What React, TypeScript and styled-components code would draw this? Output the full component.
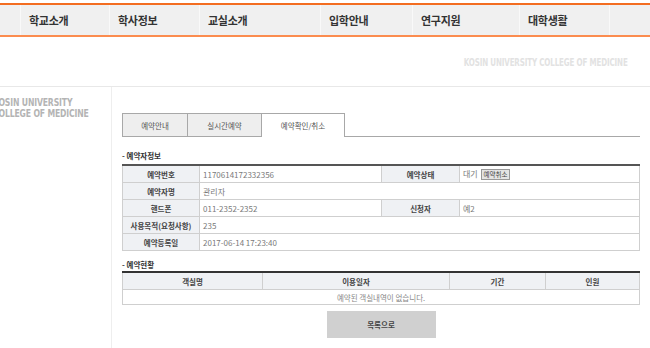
import React from 'react';
import styled, { createGlobalStyle } from 'styled-components';

const GlobalStyle = createGlobalStyle`
    html, body {
        margin: 0;
        padding: 0;
        background: #fff;
        overflow: hidden;
    }
    body {
        font-family: 'Noto Sans CJK KR', 'Noto Sans', sans-serif;
    }
`;

const menu = [
    { label: '', width: 20 },
    { label: '학교소개', width: 89 },
    { label: '학사정보', width: 90 },
    { label: '교실소개', width: 121 },
    { label: '입학안내', width: 92 },
    { label: '연구지원', width: 107 },
    { label: '대학생활', width: 90 },
    { label: '', width: 41 },
];

const tabs = [
    { label: '예약안내', width: 66 },
    { label: '실시간예약', width: 74 },
    { label: '예약확인/취소', width: 83, active: true },
];

const App = () => {
    return (
        <Page>
            <GlobalStyle />
            <Nav>
                {menu.map((m, i) => (
                    <NavItem key={i} $w={m.width} $first={i === 0}>
                        {m.label}
                    </NavItem>
                ))}
            </Nav>
            <SubHeader>
                <Slogan>KOSIN UNIVERSITY COLLEGE OF MEDICINE</Slogan>
            </SubHeader>
            <Body>
                <Side>
                    <SideLogo>
                        <SideLine>KOSIN UNIVERSITY</SideLine>
                        <SideLine>COLLEGE OF MEDICINE</SideLine>
                    </SideLogo>
                </Side>
                <Main>
                    <Tabs>
                        {tabs.map((t) => (
                            <Tab key={t.label} $w={t.width} $active={!!t.active}>
                                {t.label}
                            </Tab>
                        ))}
                        <TabRest />
                    </Tabs>

                    <SectionTitle $gap={14} $below={3}>- 예약자정보</SectionTitle>
                    <InfoTable>
                        <colgroup>
                            <col style={{ width: 77 }} />
                            <col style={{ width: 182 }} />
                            <col style={{ width: 78 }} />
                            <col />
                        </colgroup>
                        <tbody>
                            <tr>
                                <Th>예약번호</Th>
                                <Td>1170614172332356</Td>
                                <Th>예약상태</Th>
                                <Td>
                                    대기 <CancelButton>예약취소</CancelButton>
                                </Td>
                            </tr>
                            <tr>
                                <Th>예약자명</Th>
                                <Td colSpan={3}>관리자</Td>
                            </tr>
                            <tr>
                                <Th>핸드폰</Th>
                                <Td>011-2352-2352</Td>
                                <Th>신청자</Th>
                                <Td>예2</Td>
                            </tr>
                            <tr>
                                <Th>사용목적(요청사항)</Th>
                                <Td colSpan={3}>235</Td>
                            </tr>
                            <tr>
                                <Th>예약등록일</Th>
                                <Td colSpan={3}>2017-06-14 17:23:40</Td>
                            </tr>
                        </tbody>
                    </InfoTable>

                    <SectionTitle $gap={9} $below={1}>- 예약현황</SectionTitle>
                    <ListTable>
                        <colgroup>
                            <col style={{ width: 140 }} />
                            <col style={{ width: 187 }} />
                            <col style={{ width: 96 }} />
                            <col />
                        </colgroup>
                        <thead>
                            <tr>
                                <HeadCell>객실명</HeadCell>
                                <HeadCell>이용일자</HeadCell>
                                <HeadCell>기간</HeadCell>
                                <HeadCell>인원</HeadCell>
                            </tr>
                        </thead>
                        <tbody>
                            <tr>
                                <EmptyCell colSpan={4}>예약된 객실내역이 없습니다.</EmptyCell>
                            </tr>
                        </tbody>
                    </ListTable>

                    <ButtonRow>
                        <ListButton>목록으로</ListButton>
                    </ButtonRow>
                </Main>
            </Body>
        </Page>
    );
};

export default App;

const Page = styled.div`
    width: 650px;
    height: 348px;
    padding-top: 3px;
    box-sizing: border-box;
    overflow: hidden;
`;

const Nav = styled.div`
    display: flex;
    height: 30px;
    background: #f0f0f0;
    border-top: 2px solid #f36d21;
    border-bottom: 2px solid #fb8c4f;
`;

const NavItem = styled.div<{ $w: number; $first: boolean }>`
    flex: 0 0 ${(p) => p.$w}px;
    box-sizing: border-box;
    border-left: ${(p) => (p.$first ? 'none' : '1px solid #f9f9f9')};
    padding-left: 8px;
    display: flex;
    align-items: center;
    font-size: 11px;
    font-weight: 700;
    color: #333;
    letter-spacing: -0.3px;
`;

const SubHeader = styled.div`
    height: 49px;
    border-bottom: 1px solid #e8e8e8;
    display: flex;
    justify-content: flex-end;
    align-items: center;
    padding-right: 22px;
`;

const Slogan = styled.div`
    font-family: 'DejaVu Sans Condensed', 'Liberation Sans Narrow', sans-serif;
    font-weight: 700;
    font-size: 11px;
    color: #e2e2e2;
    letter-spacing: -0.2px;
    transform: scaleX(0.72);
    transform-origin: right center;
    white-space: nowrap;
    margin-top: 2px;
`;

const Body = styled.div`
    display: flex;
    height: 262px;
`;

const Side = styled.div`
    flex: 0 0 111px;
    border-right: 1px solid #eeeeee;
    overflow: hidden;
    padding-top: 10px;
`;

const SideLogo = styled.div`
    margin-left: -7px;
    font-family: 'DejaVu Sans Condensed', 'Liberation Sans Narrow', sans-serif;
    font-weight: 700;
    font-size: 11px;
    color: #b4b4b4;
    white-space: nowrap;
    transform: scaleX(0.78);
    transform-origin: left top;
    letter-spacing: -0.2px;
`;

const SideLine = styled.div`
    line-height: 11px;
    height: 11px;
`;

const Main = styled.div`
    flex: 0 0 518px;
    padding-left: 10px;
    padding-top: 26px;
`;

const Tabs = styled.div`
    display: flex;
    height: 24px;
`;

const Tab = styled.div<{ $w: number; $active: boolean }>`
    flex: 0 0 ${(p) => p.$w}px;
    box-sizing: border-box;
    display: flex;
    align-items: center;
    justify-content: center;
    font-size: 7.5px;
    color: #555;
    background: ${(p) => (p.$active ? '#fff' : '#eeeeee')};
    border: 1px solid #a8a8a8;
    border-bottom: ${(p) => (p.$active ? 'none' : '1px solid #a8a8a8')};
    & + & {
        border-left: none;
    }
`;

const TabRest = styled.div`
    flex: 1;
    border-bottom: 1px solid #a8a8a8;
`;

const SectionTitle = styled.div<{ $gap: number; $below: number }>`
    margin-top: ${(p) => p.$gap}px;
    margin-bottom: ${(p) => p.$below}px;
    font-size: 7.5px;
    font-weight: 700;
    color: #333;
    line-height: 10px;
    height: 10px;
`;

const InfoTable = styled.table`
    width: 518px;
    border-collapse: collapse;
    table-layout: fixed;
    border-top: 2px solid #555;
`;

const Th = styled.th`
    height: 16px;
    padding: 0;
    background: #eff1f4;
    border: 1px solid #cfcfcf;
    font-size: 7.5px;
    font-weight: 700;
    color: #444;
    text-align: center;
    white-space: nowrap;
`;

const Td = styled.td`
    height: 16px;
    padding: 0 0 0 3px;
    border: 1px solid #cfcfcf;
    font-size: 8px;
    color: #7a7a7a;
    white-space: nowrap;
`;

const CancelButton = styled.span`
    display: inline-block;
    font-size: 6.5px;
    color: #444;
    background: #e4e4e4;
    border: 1px solid #999;
    padding: 0 2px;
    line-height: 9px;
    vertical-align: middle;
    margin-left: 1px;
`;

const ListTable = styled.table`
    width: 518px;
    border-collapse: collapse;
    table-layout: fixed;
    border-top: 2px solid #333;
`;

const HeadCell = styled.th`
    height: 16px;
    padding: 0;
    background: #eff1f4;
    border: 1px solid #cfcfcf;
    font-size: 7.5px;
    font-weight: 700;
    color: #444;
    text-align: center;
`;

const EmptyCell = styled.td`
    height: 14px;
    padding: 0;
    border: 1px solid #cfcfcf;
    font-size: 7.5px;
    color: #888;
    text-align: center;
`;

const ButtonRow = styled.div`
    display: flex;
    justify-content: center;
    margin-top: 6px;
`;

const ListButton = styled.div`
    width: 109px;
    height: 27px;
    background: #d0d0d0;
    display: flex;
    align-items: center;
    justify-content: center;
    font-size: 7.5px;
    font-weight: 700;
    color: #444;
`;
